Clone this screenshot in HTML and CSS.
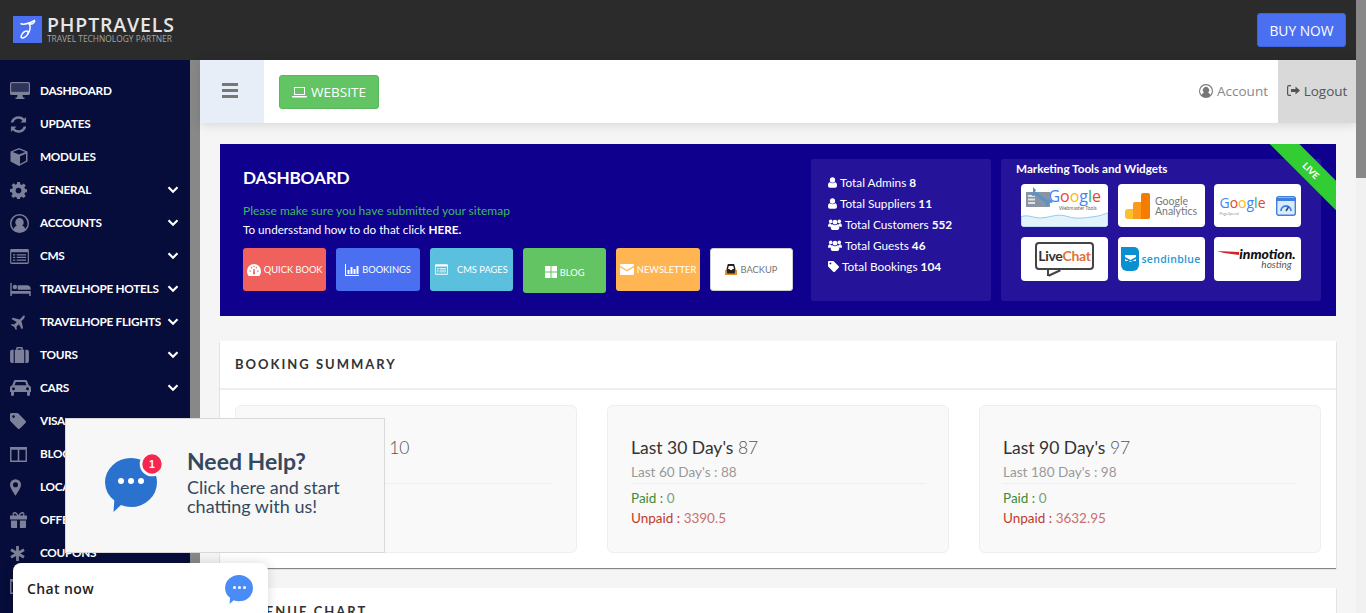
FILE: index.html
```html
<!DOCTYPE html>
<html lang="en">
<head>
  <meta charset="UTF-8" />
  <meta name="viewport" content="width=device-width, initial-scale=1.0"/>
  <title>PHPTRAVELS Dashboard</title>
  <link rel="stylesheet" href="styles.css">
</head>
<body>

  <svg class="defs" width="0" height="0">
    <symbol id="i-desktop" viewBox="0 0 20 18"><path d="M1.5 0h17A1.500 1.500 0 0 1 20 1.500v10a1.500 1.500 0 0 1-1.500 1.500H12.500l.5 2.500h1.500v1.500h-9v-1.500H7l.5-2.500H1.500A1.500 1.500 0 0 1 0 11.500v-10A1.500 1.500 0 0 1 1.500 0zM1.300 1.300v8.500h17.400V1.300z"/><rect x="1.300" y="1.300" width="17.400" height="8.500" opacity=".35"/></symbol>
    <symbol id="i-refresh" viewBox="0 0 18 18"><path d="M17 1v6h-6l2.300-2.300A5.800 5.800 0 0 0 3.500 7H.8A8.500 8.500 0 0 1 15.200 2.800zM1 17v-6h6l-2.300 2.300A5.800 5.800 0 0 0 14.500 11h2.700A8.500 8.500 0 0 1 2.800 15.200z"/></symbol>
    <symbol id="i-cube" viewBox="0 0 18 18"><path d="M9 0l8.500 3.500v10L9 18 .5 13.500v-10zM2.600 4L9 6.600 15.400 4 9 1.600zM10 8.200v7.700l6-3.200V5.700z"/></symbol>
    <symbol id="i-cog" viewBox="0 0 18 18"><path d="M7.500 0h3l.4 2.400 1.600.7 2-1.400 2.100 2.100-1.400 2 .7 1.600 2.100.4v3l-2.100.4-.7 1.600 1.400 2-2.100 2.100-2-1.400-1.600.7-.4 2.300h-3l-.4-2.300-1.600-.7-2 1.400-2.100-2.100 1.400-2-.7-1.600L0 10.500v-3l2.400-.4.7-1.600-1.400-2 2.100-2.100 2 1.400 1.600-.7zM9 6a3 3 0 1 0 0 6 3 3 0 0 0 0-6z"/></symbol>
    <symbol id="i-account" viewBox="0 0 18 18"><path d="M9 0a9 9 0 1 1 0 18A9 9 0 0 1 9 0zm0 1.500A7.500 7.500 0 0 0 3.500 14.100C4.300 12.300 5.400 11.300 6.500 11a4 4 0 1 1 5 0c1.100.3 2.200 1.300 3 3.100A7.500 7.500 0 0 0 9 1.500z"/></symbol>
    <symbol id="i-list" viewBox="0 0 20 16"><path d="M1.500 0h17A1.500 1.500 0 0 1 20 1.500v13a1.500 1.500 0 0 1-1.500 1.500h-17A1.500 1.500 0 0 1 0 14.500v-13A1.500 1.500 0 0 1 1.500 0zM1.200 3.500v11h17.600v-11zM3 5.500h2.500v1.300H3zm4 0h10v1.300H7zM3 8.300h2.500v1.300H3zm4 0h10v1.300H7zM3 11.100h2.500v1.300H3zm4 0h10v1.300H7z"/></symbol>
    <symbol id="i-bed" viewBox="0 0 22 14"><path d="M0 0h1.500v8.500H22V14h-1.700v-2.500H1.700V14H0zM5 2a2.400 2.400 0 1 1 0 4.800A2.400 2.400 0 0 1 5 2zm3 .5h10c2.200 0 4 1.300 4 3.800v1H8z"/></symbol>
    <symbol id="i-plane" viewBox="0 0 18 18"><path d="M17.300.7c.9.900.2 2.800-1 4l-2.600 2.600 2 8.300-1.600 1.600-3.400-6.200-3 3 .5 2.900L7 18l-2.100-3.900L1 12l1.100-1.200 2.900.5 3-3L1.800 4.900 3.400 3.300l8.300 2L14.300 2.700c1.200-1.200 2.100-2.900 3-2z"/></symbol>
    <symbol id="i-suitcase" viewBox="0 0 20 17"><path d="M6.500 3V1.300C6.500.6 7.100 0 7.800 0h4.400c.7 0 1.300.6 1.300 1.300V3H15v14H5V3zM8 3h4V1.500H8zM3.800 3v14H2a2 2 0 0 1-2-2V5a2 2 0 0 1 2-2zm12.400 0H18a2 2 0 0 1 2 2v10a2 2 0 0 1-2 2h-1.800z"/></symbol>
    <symbol id="i-car" viewBox="0 0 21 16"><path d="M5.500 0h10c.8 0 1.400.5 1.700 1.200l1.500 4c1.300.3 2.300 1.500 2.300 2.800v4h-1v2.500a1.500 1.500 0 0 1-3 0V12H4v2.500a1.500 1.500 0 0 1-3 0V12H0V8c0-1.300 1-2.500 2.300-2.800l1.500-4C4.100.5 4.700 0 5.500 0zm.3 2L4.600 5.200h11.800L15.200 2zM3.500 7.200a1.500 1.500 0 1 0 0 3 1.500 1.500 0 0 0 0-3zm14 0a1.500 1.500 0 1 0 0 3 1.500 1.500 0 0 0 0-3z"/></symbol>
    <symbol id="i-tag" viewBox="0 0 18 18"><path d="M1.500 0H8c.5 0 1 .2 1.400.6l8 8a1.800 1.800 0 0 1 0 2.600l-6.200 6.200a1.800 1.800 0 0 1-2.600 0l-8-8C.2 9 0 8.500 0 8V1.500C0 .7.700 0 1.500 0zM4 2.500a1.500 1.500 0 1 0 0 3 1.500 1.500 0 0 0 0-3z"/></symbol>
    <symbol id="i-columns" viewBox="0 0 18 16"><path d="M0 0h18v16H0zM1.500 3v11.500h6.700V3zm8.300 0v11.500h6.700V3z"/></symbol>
    <symbol id="i-marker" viewBox="0 0 12 18"><path d="M6 0a6 6 0 0 1 6 6c0 3-3.500 8.500-6 12C3.500 14.500 0 9 0 6a6 6 0 0 1 6-6zm0 3.200a2.800 2.800 0 1 0 0 5.600 2.800 2.800 0 0 0 0-5.600z"/></symbol>
    <symbol id="i-gift" viewBox="0 0 18 17"><path d="M5 0c1.700 0 3.200 1.500 4 3.500C9.800 1.500 11.300 0 13 0a2.300 2.300 0 0 1 1.800 3.800H18V8H0V3.800h3.200A2.300 2.300 0 0 1 5 0zm0 1.500a.9.900 0 0 0 0 2.300h2.500C6.900 2.500 5.900 1.500 5 1.500zm8 0c-.9 0-1.900 1-2.500 2.300H13a.9.900 0 0 0 0-2.300zM1 9h6.500v8H2a1 1 0 0 1-1-1zm9.500 0H17v7a1 1 0 0 1-1 1h-5.500z"/></symbol>
    <symbol id="i-asterisk" viewBox="0 0 16 16"><path d="M6.500 0h3v5.400L14.200 2.700l1.500 2.600L11 8l4.700 2.700-1.500 2.600L9.500 10.600V16h-3v-5.400l-4.700 2.700L.3 10.700 5 8 .3 5.300l1.500-2.600 4.700 2.700z"/></symbol>
    <symbol id="i-chevron" viewBox="0 0 12 8"><path d="M1.500 1.300L6 5.800l4.500-4.500" fill="none" stroke="currentColor" stroke-width="2.200"/></symbol>
    <symbol id="i-user" viewBox="0 0 12 14"><path d="M6 0a3.500 3.500 0 0 1 3.500 3.500A3.500 3.500 0 0 1 6 7.200a3.500 3.500 0 0 1-3.500-3.700A3.500 3.500 0 0 1 6 0zM2.500 6.500C3.400 7.500 4.600 8 6 8s2.600-.5 3.500-1.500C11.200 6.800 12 8.500 12 11c0 1.800-1 3-2.500 3h-7C1 14 0 12.800 0 11c0-2.500.8-4.200 2.500-4.500z"/></symbol>
    <symbol id="i-users" viewBox="0 0 18 14"><circle cx="3.500" cy="3" r="2.300"/><circle cx="14.500" cy="3" r="2.300"/><circle cx="9" cy="4" r="3"/><path d="M0 10c0-3 .8-4.300 2.500-4.500.6.600 1.300.9 2 1C4 7.700 3.800 9 4 10zM18 10c0-3-.8-4.300-2.500-4.500-.6.600-1.300.9-2 1 .5 1.200.7 2.500.5 3.500zM5.800 6.800C6.600 7.600 7.700 8 9 8s2.400-.4 3.200-1.200c1.600.3 2.300 1.900 2.300 4.200 0 1.800-1 3-2.400 3H5.900c-1.400 0-2.400-1.200-2.400-3 0-2.300.7-3.900 2.300-4.200z"/></symbol>
    <symbol id="i-bubble" viewBox="0 0 52 54"><path d="M26 0a26 24.500 0 0 1 0 49c-3.500 0-7-.7-10-1.900L8.500 54l.8-11.500A24 24 0 0 1 0 24.500 26 24.500 0 0 1 26 0z"/></symbol>
  </svg>

  <header class="topbar">
    <a class="brand" href="#">
      <span class="brand-mark">
        <svg width="20" height="21" viewBox="0 0 20 21" fill="none" stroke="#fff" stroke-width="1.500"><path d="M2.500 4.500C5 6 8 5 11 4c2-.7 4-1.700 5.500-2.500.5 1-.5 2.500-2 3.200-1.200.5-2.500.4-3.500.1 1.500 2 1.500 4.500.3 7.500-1.300 3.300-3.500 6-6.300 6.700-1.500.3-2.300-.7-1.700-2.200.8-2 3-4.500 5.200-4.800 1.800-.2 2 1.800.8 2.800"/></svg>
      </span>
      <span class="brand-text">
        <span class="brand-name">PHPTRAVELS</span>
        <span class="brand-sub">TRAVEL TECHNOLOGY PARTNER</span>
      </span>
    </a>
    <a class="buy-now" href="#">BUY NOW</a>
  </header>

  <div class="layout">
    <nav class="sidebar">
      <a class="nav-item" href="#"><span class="nav-icon"><svg width="20" height="18"><use href="#i-desktop"/></svg></span>DASHBOARD</a>
      <a class="nav-item" href="#"><span class="nav-icon"><svg width="17" height="17"><use href="#i-refresh"/></svg></span>UPDATES</a>
      <a class="nav-item" href="#"><span class="nav-icon"><svg width="18" height="18"><use href="#i-cube"/></svg></span>MODULES</a>
      <a class="nav-item has-sub" href="#"><span class="nav-icon"><svg width="17" height="17"><use href="#i-cog"/></svg></span>GENERAL<svg class="chevron" width="12" height="8"><use href="#i-chevron"/></svg></a>
      <a class="nav-item has-sub" href="#"><span class="nav-icon"><svg width="19" height="19"><use href="#i-account"/></svg></span>ACCOUNTS<svg class="chevron" width="12" height="8"><use href="#i-chevron"/></svg></a>
      <a class="nav-item has-sub" href="#"><span class="nav-icon"><svg width="19" height="15"><use href="#i-list"/></svg></span>CMS<svg class="chevron" width="12" height="8"><use href="#i-chevron"/></svg></a>
      <a class="nav-item has-sub" href="#"><span class="nav-icon"><svg width="21" height="13"><use href="#i-bed"/></svg></span>TRAVELHOPE HOTELS<svg class="chevron" width="12" height="8"><use href="#i-chevron"/></svg></a>
      <a class="nav-item has-sub" href="#"><span class="nav-icon"><svg width="15" height="15"><use href="#i-plane"/></svg></span>TRAVELHOPE FLIGHTS<svg class="chevron" width="12" height="8"><use href="#i-chevron"/></svg></a>
      <a class="nav-item has-sub" href="#"><span class="nav-icon"><svg width="19" height="16"><use href="#i-suitcase"/></svg></span>TOURS<svg class="chevron" width="12" height="8"><use href="#i-chevron"/></svg></a>
      <a class="nav-item has-sub" href="#"><span class="nav-icon"><svg width="21" height="16"><use href="#i-car"/></svg></span>CARS<svg class="chevron" width="12" height="8"><use href="#i-chevron"/></svg></a>
      <a class="nav-item" href="#"><span class="nav-icon"><svg width="16" height="16"><use href="#i-tag"/></svg></span>VISA</a>
      <a class="nav-item" href="#"><span class="nav-icon"><svg width="17" height="15"><use href="#i-columns"/></svg></span>BLOG</a>
      <a class="nav-item" href="#"><span class="nav-icon nav-icon-narrow"><svg width="11" height="17"><use href="#i-marker"/></svg></span>LOCATIONS</a>
      <a class="nav-item" href="#"><span class="nav-icon"><svg width="17" height="16"><use href="#i-gift"/></svg></span>OFFERS</a>
      <a class="nav-item" href="#"><span class="nav-icon"><svg width="15" height="15"><use href="#i-asterisk"/></svg></span>COUPONS</a>
      <a class="nav-item" href="#"><span class="nav-icon"><svg width="17" height="15"><use href="#i-columns"/></svg></span></a>
    </nav>
    <div class="sidebar-scroll"></div>

    <main class="main">
      <div class="toolbar">
        <button class="menu-toggle" type="button" aria-label="Menu"><span></span><span></span><span></span></button>
        <a class="btn-website" href="#">
          <svg width="15" height="11" viewBox="0 0 15 11" fill="#fff"><path d="M2 0h11v8H2zm1 1v6h9V1zM0 9h15c0 1-.5 1.500-1.200 1.500H1.200C.5 10.500 0 10 0 9z"/></svg>
          WEBSITE
        </a>
        <a class="account" href="#"><svg width="14" height="14"><use href="#i-account"/></svg>Account</a>
        <a class="logout" href="#">
          <svg width="13" height="11" viewBox="0 0 13 11"><path d="M4 0v1.300H2c-.5 0-.8.300-.8.800v6.800c0 .5.300.8.800.8h2V11H2a2 2 0 0 1-2-2V2a2 2 0 0 1 2-2zm4.500 1.500L13 5.500l-4.500 4V7H4V4h4.500z"/></svg>
          Logout
        </a>
      </div>

      <div class="content">
        <section class="hero">
          <div class="ribbon">LIVE</div>
          <div class="hero-left">
            <h1>DASHBOARD</h1>
            <p class="hero-note">Please make sure you have submitted your sitemap</p>
            <p class="hero-link">To undersstand how to do that click <strong>HERE.</strong></p>
            <div class="quick-links">
              <a class="quick red" href="#">
                <svg width="14" height="12" viewBox="0 0 14 12"><path fill="#fff" d="M7 0a7 7 0 0 1 7 7c0 2-.6 3.700-1.800 5H1.800C.6 10.700 0 9 0 7a7 7 0 0 1 7-7z"/><path fill="#f0605c" d="M6.400 5h1.200l.4 4.500a1 1 0 1 1-2 0zM2.500 6.500h1.300v1.300H2.500zM10.200 6.500h1.300v1.300h-1.300zM4 3h1.300v1.300H4zM8.700 3H10v1.300H8.700zM6.400 1.800h1.200v1.300H6.400z"/></svg>
                QUICK BOOK
              </a>
              <a class="quick blue" href="#">
                <svg width="14" height="12" viewBox="0 0 14 12" fill="#fff"><path d="M0 0h1v11h13v1H0zM2.500 6h2v4h-2zm3-3h2v7h-2zm3 2h2v5h-2zm3-3h2v8h-2z"/></svg>
                BOOKINGS
              </a>
              <a class="quick sky" href="#">
                <svg class="wide-gap" width="13" height="11"><use href="#i-list"/></svg>
                CMS PAGES
              </a>
              <a class="quick green" href="#">
                <svg width="12" height="12" viewBox="0 0 12 12" fill="#fff"><path d="M0 0h5.500v5.500H0zm6.500 0H12v5.500H6.500zM0 6.500h5.500V12H0zm6.500 0H12V12H6.500z"/></svg>
                BLOG
              </a>
              <a class="quick orange" href="#">
                <svg width="14" height="11" viewBox="0 0 14 11" fill="#fff"><path d="M1 0h12a1 1 0 0 1 1 1v.8L7 6 0 1.800V1a1 1 0 0 1 1-1zM0 3.200L7 7.500l7-4.300V10a1 1 0 0 1-1 1H1a1 1 0 0 1-1-1z"/></svg>
                NEWSLETTER
              </a>
              <a class="quick white" href="#">
                <svg width="12" height="11" viewBox="0 0 12 11"><path fill="#e0902c" d="M0 6h12v5H0z"/><path fill="#222" d="M1.500 5l1.300-5h6.400l1.300 5-.8 4.500H2.300z"/><path fill="#fff" d="M3 5l.8-3h4.400L9 5H7.500L7 6H5l-.5-1z"/></svg>
                BACKUP
              </a>
            </div>
          </div>

          <div class="stats">
            <div class="stat"><svg width="9" height="11"><use href="#i-user"/></svg><span>Total Admins <b>8</b></span></div>
            <div class="stat"><svg width="9" height="11"><use href="#i-user"/></svg><span>Total Suppliers <b>11</b></span></div>
            <div class="stat"><svg width="14" height="11"><use href="#i-users"/></svg><span>Total Customers <b>552</b></span></div>
            <div class="stat"><svg width="14" height="11"><use href="#i-users"/></svg><span>Total Guests <b>46</b></span></div>
            <div class="stat"><svg width="11" height="11"><use href="#i-tag"/></svg><span>Total Bookings <b>104</b></span></div>
          </div>

          <div class="marketing">
            <h2>Marketing Tools and Widgets</h2>
            <div class="logos">
              <a class="logo logo-gsc" href="#">
                <svg class="gsc-wave" viewBox="0 0 87 17" preserveAspectRatio="none"><path fill="#e4f3fb" stroke="#8ccbe8" d="M0 6c8-3 14 3 24 1s14-4 23-1 18 1 26 0 10-3 14-4v15H0z"/></svg>
                <svg class="gsc-tool" width="29" height="22" viewBox="0 0 29 22"><path fill="#8a94a3" d="M0 5h24v15H0z"/><path fill="#dfe4ea" d="M2 8h7v2H2zm0 3.500h7v2H2zm0 3.500h7v2H2z"/><path fill="#5a93c9" d="M7 0l3 3-1 2 3 1 9 7 3-.5 3 2.500-2 1-3-.5 1 3-2.500.5-2-4-9-6.500-3 .5-2.500-4 3 1z"/></svg>
                <span class="g-word"><i class="cb">G</i><i class="cr">o</i><i class="cy">o</i><i class="cb">g</i><i class="cg">l</i><i class="cr">e</i></span>
                <span class="gsc-sub">Webmaster Tools</span>
              </a>
              <a class="logo logo-ga" href="#">
                <svg width="25" height="26" viewBox="0 0 25 26"><path fill="#fbc02d" d="M0 19a3 3 0 0 1 3-3h6v10H3a3 3 0 0 1-3-3z"/><path fill="#fb9a1c" d="M8 11a2 2 0 0 1 2-2h6v17H8z"/><path fill="#f57c00" d="M16 2a2 2 0 0 1 2-2h5a2 2 0 0 1 2 2v22a2 2 0 0 1-2 2h-7z"/></svg>
                <span class="ga-text">Google<br>Analytics</span>
              </a>
              <a class="logo logo-psi" href="#">
                <span class="psi-word"><span class="g-word"><i class="cb">G</i><i class="cr">o</i><i class="cy">o</i><i class="cb">g</i><i class="cg">l</i><i class="cr">e</i></span><span class="psi-sub">PageSpeed</span></span>
                <svg width="20" height="20" viewBox="0 0 20 20"><rect x=".7" y=".7" width="18.600" height="18.600" rx="2" fill="#dcebfb" stroke="#3f7fe0" stroke-width="1.400"/><path fill="#3f7fe0" d="M.7 2h18.600v3H.7z"/><path fill="none" stroke="#3f7fe0" stroke-width="1.800" d="M5 15a5 5 0 0 1 10 0"/><path stroke="#26466d" stroke-width="1.500" d="M10 15l2.500-4"/></svg>
              </a>
              <a class="logo logo-livechat" href="#">
                <span class="lc-box"><span class="lc-live">Live</span><span class="lc-chat">Chat</span></span>
              </a>
              <a class="logo logo-sib" href="#">
                <svg width="18" height="24" viewBox="0 0 18 24"><path fill="#0b8fd0" d="M0 0h13a5 5 0 0 1 5 5v13a6 6 0 0 1-6 6H6a6 6 0 0 1-6-6z"/><path fill="#fff" d="M4 8h11v2l-5.500 3L4 10zm0 4l5.500 3L15 12v2H4z"/></svg>
                <span class="sib-text">sendinblue</span>
              </a>
              <a class="logo logo-inmotion" href="#">
                <svg class="swoosh" width="22" height="5" viewBox="0 0 22 5"><path fill="#d2232a" d="M0 0l22 1v3L7 2z"/></svg>
                <span class="im-text"><b>inmotion.</b><em>hosting</em></span>
              </a>
            </div>
          </div>
        </section>

        <section class="card">
          <h3 class="card-title">BOOKING SUMMARY</h3>
          <div class="summary">
            <div class="period">
              <div class="period-main">Current Month's <span>10</span></div>
              <div class="period-sub">&nbsp;</div>
            </div>
            <div class="period">
              <div class="period-main">Last 30 Day's <span>87</span></div>
              <div class="period-sub">Last 60 Day's : 88</div>
              <div class="paid"><b>Paid :</b> 0</div>
              <div class="unpaid"><b>Unpaid :</b> 3390.5</div>
            </div>
            <div class="period">
              <div class="period-main">Last 90 Day's <span>97</span></div>
              <div class="period-sub">Last 180 Day's : 98</div>
              <div class="paid"><b>Paid :</b> 0</div>
              <div class="unpaid"><b>Unpaid :</b> 3632.95</div>
            </div>
          </div>
        </section>

        <section class="card card-next">
          <h3 class="card-title">REVENUE CHART</h3>
        </section>
      </div>
    </main>
    <div class="page-scroll"><div class="page-thumb"></div></div>
  </div>

  <!-- chat widgets float over the page -->
  <div class="help-popup">
    <div class="help-icon">
      <svg width="52" height="54" fill="#2b72cf"><use href="#i-bubble"/></svg>
      <span class="help-dots"><i></i><i></i><i></i></span>
      <span class="help-badge">1</span>
    </div>
    <div class="help-text">
      <strong>Need Help?</strong>
      <span>Click here and start chatting with us!</span>
    </div>
  </div>

  <div class="chat-now">
    <span>Chat now</span>
    <div class="chat-now-icon">
      <svg width="28" height="29" fill="#4a8cf7"><use href="#i-bubble"/></svg>
      <span class="chat-dots"><i></i><i></i><i></i></span>
    </div>
  </div>

</body>
</html>
```

FILE: styles.css
```css
* {
  box-sizing: border-box;
}
html, body {
  height: 613px;
  overflow: hidden;
}
body {
  margin: 0;
  font-family: Lato, 'Open Sans', sans-serif;
  font-size: 13px;
  color: #333;
  background: #f5f5f5;
}
a {
  text-decoration: none;
  color: inherit;
}
.defs {
  position: absolute;
}

/* top bar */
.topbar {
  height: 60px;
  background: #2b2b2b;
  display: flex;
  align-items: center;
  justify-content: space-between;
  padding: 0 20px 0 13px;
}
.brand {
  display: flex;
  align-items: center;
  gap: 5px;
}
.brand-mark {
  width: 29px;
  height: 27px;
  margin-top: -1px;
  background: #4a6ff0;
  display: flex;
  align-items: center;
  justify-content: center;
}
.brand-text {
  display: flex;
  flex-direction: column;
}
.brand-name {
  font-family: 'Open Sans', sans-serif;
  font-size: 19.500px;
  font-weight: 600;
  line-height: 18px;
  letter-spacing: 0.850px;
  color: #e6e6e6;
}
.brand-sub {
  font-family: 'Open Sans', sans-serif;
  font-size: 8.400px;
  line-height: 10px;
  color: #a5a5a5;
}
.buy-now {
  width: 89px;
  height: 34px;
  background: #4a6ff0;
  border: 1px solid #3f62de;
  border-radius: 3px;
  color: #fff;
  font-family: 'Open Sans', sans-serif;
  font-size: 13.800px;
  display: flex;
  align-items: center;
  justify-content: center;
}

/* sidebar */
.layout {
  display: flex;
  height: 553px;
}
.sidebar {
  width: 190px;
  flex: none;
  background: #070d3a;
  padding-top: 15px;
}
.sidebar-scroll {
  width: 10px;
  flex: none;
  background: #888;
}
.nav-item {
  height: 33px;
  display: flex;
  align-items: center;
  color: #fff;
  font-size: 11.800px;
  font-weight: 700;
  line-height: 14px;
  white-space: nowrap;
  padding: 0 11px 1px 0;
  letter-spacing: -0.3px;
}
.nav-icon {
  width: 40px;
  flex: none;
  padding-left: 10px;
  display: flex;
  align-items: center;
  fill: #7c8098;
}
.nav-icon-narrow {
  padding-left: 10px;
}
.chevron {
  margin-left: auto;
  color: #fff;
}

/* main column */
.main {
  flex: 1;
  min-width: 0;
  display: flex;
  flex-direction: column;
  background: #f5f5f5;
}
.toolbar {
  height: 63px;
  flex: none;
  background: #fff;
  display: flex;
  align-items: stretch;
  box-shadow: 0 2px 10px rgba(0, 0, 0, 0.12);
  position: relative;
  z-index: 1;
}
.menu-toggle {
  width: 64px;
  border: none;
  background: #e8eef8;
  display: flex;
  flex-direction: column;
  align-items: center;
  justify-content: center;
  gap: 3px;
  padding: 0 4px 2px 0;
}
.menu-toggle span {
  width: 16px;
  height: 3px;
  background: #777;
}
.btn-website {
  align-self: center;
  margin: 1px 0 0 15px;
  width: 100px;
  height: 34px;
  background: #62c462;
  border: 1px solid #5cb85c;
  border-radius: 3px;
  color: #fff;
  font-family: 'Open Sans', sans-serif;
  font-size: 13.500px;
  display: flex;
  align-items: center;
  justify-content: center;
  gap: 4px;
}
.account {
  margin: 0 0 1px auto;
  align-self: center;
  display: flex;
  align-items: center;
  gap: 4px;
  font-family: 'Open Sans', sans-serif;
  font-size: 13.500px;
  color: #888;
  fill: #777;
  padding-right: 10px;
}
.logout {
  width: 78px;
  background: #d9d9d9;
  display: flex;
  align-items: center;
  justify-content: center;
  gap: 4px;
  padding-bottom: 2px;
  font-family: 'Open Sans', sans-serif;
  font-size: 13.500px;
  color: #555;
  fill: #555;
}
.content {
  padding: 21px 20px 0;
}

/* blue dashboard banner */
.hero {
  position: relative;
  overflow: hidden;
  height: 172px;
  background: #10008e;
  display: flex;
  padding: 15px;
  color: #fff;
}
.ribbon {
  position: absolute;
  top: 16px;
  right: -35px;
  width: 120px;
  height: 21px;
  line-height: 21px;
  background: #32cd32;
  color: #fff;
  font-size: 9px;
  font-weight: 900;
  text-align: center;
  transform: rotate(45deg);
}
.hero-left {
  flex: 1;
  padding: 10px 0 0 8px;
}
.hero h1 {
  margin: 0 0 16px;
  font-size: 17.200px;
  line-height: 18px;
  font-weight: 700;
  letter-spacing: -0.2px;
}
.hero-note {
  margin: 0 0 3px;
  font-size: 12px;
  line-height: 15px;
  color: #3dba5d;
}
.hero-link {
  margin: 0;
  font-size: 11.700px;
  line-height: 16px;
}
.quick-links {
  display: flex;
  align-items: flex-start;
  gap: 10px;
  margin-top: 11px;
}
.quick {
  width: 83.350px;
  height: 43px;
  border-radius: 3px;
  display: flex;
  align-items: center;
  justify-content: center;
  gap: 3px;
  font-size: 9.300px;
  white-space: nowrap;
  color: #fff;
  fill: #fff;
}
.quick.red { background: #f0605c; }
.quick.blue { background: #4a6ff0; }
.quick.sky { background: #5bc0de; }
.quick.green { background: #62c462; height: 45px; padding-top: 3px; }
.quick.orange { background: #ffb552; }
.quick.white { background: #fff; color: #777; border: 1px solid #ccc; }
.wide-gap {
  margin-right: 6px;
}

.stats {
  width: 180px;
  flex: none;
  margin-right: 10px;
  background: #25149a;
  border-radius: 3px;
  padding: 13px 17px;
  font-size: 11.800px;
}
.stat {
  height: 21px;
  display: flex;
  align-items: center;
  gap: 3px;
  white-space: nowrap;
  fill: #fff;
}
.stat b {
  font-weight: 700;
}
.marketing {
  width: 320px;
  flex: none;
  background: #25149a;
  border-radius: 3px;
  padding: 2px 20px 0 15px;
}
.marketing h2 {
  margin: 0 0 9px;
  font-size: 11.700px;
  line-height: 14px;
  font-weight: 700;
}
.logos {
  display: grid;
  grid-template-columns: repeat(3, 87px);
  grid-template-rows: 43px 44px;
  gap: 10px 9.500px;
  margin-left: 5px;
}
.logo {
  position: relative;
  overflow: hidden;
  background: #fff;
  border-radius: 4px;
  display: flex;
  align-items: center;
  justify-content: center;
  color: #555;
}
.logo i {
  font-style: normal;
}
.cb { color: #4285f4; }
.cr { color: #ea4335; }
.cy { color: #fbbc05; }
.cg { color: #34a853; }
.g-word {
  font-family: 'Open Sans', sans-serif;
  font-size: 14px;
  line-height: 15px;
}
.logo-gsc .g-word {
  position: absolute;
  top: 3px;
  right: 7px;
  font-size: 16px;
  line-height: 18px;
}
.gsc-sub {
  position: absolute;
  top: 21px;
  left: 38px;
  font-size: 5px;
  color: #666;
}
.gsc-wave {
  position: absolute;
  left: 0;
  bottom: 0;
  width: 87px;
  height: 16px;
}
.gsc-tool {
  position: absolute;
  left: 5px;
  top: 3px;
}
.logo-ga {
  gap: 5px;
}
.ga-text {
  font-size: 10.500px;
  line-height: 10px;
  color: #777;
}
.logo-psi {
  gap: 10px;
}
.psi-word {
  display: flex;
  flex-direction: column;
}
.psi-sub {
  font-size: 4px;
  line-height: 4px;
  margin-top: 2px;
  color: #999;
}
.lc-box {
  position: relative;
  width: 59px;
  height: 28px;
  border: 2px solid #444;
  border-radius: 4px;
  font-size: 14px;
  line-height: 24px;
  font-weight: 700;
  text-align: center;
  letter-spacing: -0.3px;
  margin-top: -7px;
}
.lc-box::before {
  content: "";
  position: absolute;
  left: 10px;
  bottom: -8px;
  border-left: 2px solid #444;
  height: 8px;
}
.lc-box::after {
  content: "";
  position: absolute;
  left: 11px;
  bottom: -6px;
  width: 13px;
  height: 2px;
  background: #444;
  transform: rotate(-25deg);
}
.lc-live { color: #333; }
.lc-chat { color: #e2703a; }
.logo-sib {
  gap: 2px;
}
.sib-text {
  font-family: 'Open Sans', sans-serif;
  font-size: 10.500px;
  font-weight: 600;
  letter-spacing: 0.3px;
  color: #1d9ad6;
}
.swoosh {
  position: absolute;
  left: 3px;
  top: 14px;
}
.im-text {
  margin-left: 20px;
  display: flex;
  flex-direction: column;
  align-items: flex-end;
  color: #111;
  line-height: 11px;
}
.im-text b {
  font-size: 14px;
  font-style: italic;
  font-weight: 900;
}
.im-text em {
  font-size: 10px;
  color: #555;
  margin-right: 4px;
}

/* booking summary */
.card {
  background: #fff;
  margin-top: 25px;
  box-shadow: 0 1px 1px rgba(0, 0, 0, 0.45);
}
.card-next {
  margin-top: 20px;
}
.card-title {
  margin: 0;
  height: 49px;
  padding: 0 15px;
  line-height: 47px;
  border-bottom: 2px solid #eee;
  font-size: 13px;
  font-weight: 700;
  letter-spacing: 2px;
  color: #333;
}
.summary {
  display: flex;
  justify-content: space-between;
  padding: 15px 15px 15px;
}
.period {
  width: 342px;
  height: 148px;
  background: #f9f9f9;
  border: 1px solid #eee;
  border-radius: 6px;
  padding: 31px 23px 0;
}
.period-main {
  font-size: 17.500px;
  line-height: 22px;
  color: #333;
  padding-bottom: 3px;
}
.period-main span {
  color: #555;
  font-weight: 300;
}
.period-sub {
  font-size: 13.600px;
  line-height: 20px;
  color: #999;
  padding-bottom: 1px;
  border-bottom: 1px solid #eee;
  margin-bottom: 4px;
}
.paid, .unpaid {
  font-size: 13.500px;
  line-height: 20px;
}
.paid { color: #78a078; }
.paid b { color: #3d8b3d; font-weight: 400; }
.unpaid { color: #c9706c; }
.unpaid b { color: #c0392b; font-weight: 400; }

.page-scroll {
  width: 10px;
  flex: none;
  margin-top: -60px;
  height: 613px;
  background: #f1f1f1;
  position: relative;
  z-index: 2;
}
.page-thumb {
  height: 178px;
  background: #888;
}

/* chat widgets */
.help-popup {
  position: absolute;
  left: 65px;
  top: 418px;
  width: 320px;
  height: 135px;
  background: #f7f7f7;
  border: 1px solid #d9d9d9;
  display: flex;
  align-items: center;
  font-family: Lato, sans-serif;
  z-index: 5;
}
.help-icon {
  position: relative;
  width: 52px;
  height: 54px;
  margin: -1px 0 0 39px;
}
.help-dots, .chat-dots {
  position: absolute;
  display: flex;
  justify-content: center;
}
.help-dots {
  left: 0;
  top: 20px;
  width: 52px;
  gap: 4px;
}
.help-dots i {
  width: 6px;
  height: 6px;
  border-radius: 50%;
  background: #fff;
}
.help-badge {
  position: absolute;
  top: -8px;
  right: -9px;
  width: 22px;
  height: 22px;
  border: 3px solid #f7f7f7;
  box-sizing: content-box;
  border-radius: 50%;
  background: #f5274e;
  color: #fff;
  font-family: 'Liberation Sans', sans-serif;
  font-size: 12px;
  font-weight: 700;
  line-height: 22px;
  text-align: center;
  transform: scale(0.88);
}
.help-text {
  margin-left: 30px;
  width: 170px;
  margin-top: -9px;
  color: #34495e;
}
.help-text strong {
  display: block;
  font-size: 23px;
  line-height: 28px;
  font-weight: 700;
  margin-bottom: 3px;
}
.help-text span {
  display: block;
  font-size: 18px;
  line-height: 18.500px;
}
.chat-now {
  position: absolute;
  left: 13px;
  top: 563px;
  width: 255px;
  height: 50px;
  background: #fff;
  border-radius: 8px 8px 0 0;
  box-shadow: 0 0 12px rgba(0, 0, 0, 0.15);
  display: flex;
  align-items: center;
  justify-content: space-between;
  padding: 0 15px 0 14px;
  font-family: 'Open Sans', sans-serif;
  font-size: 14px;
  font-weight: 600;
  letter-spacing: 0.4px;
  color: #222;
  z-index: 5;
}
.chat-now-icon {
  position: relative;
  width: 28px;
  height: 29px;
  margin-top: 2px;
}
.chat-dots {
  left: 0;
  top: 11px;
  width: 28px;
  gap: 2px;
}
.chat-dots i {
  width: 3px;
  height: 3px;
  border-radius: 50%;
  background: #fff;
}
```
